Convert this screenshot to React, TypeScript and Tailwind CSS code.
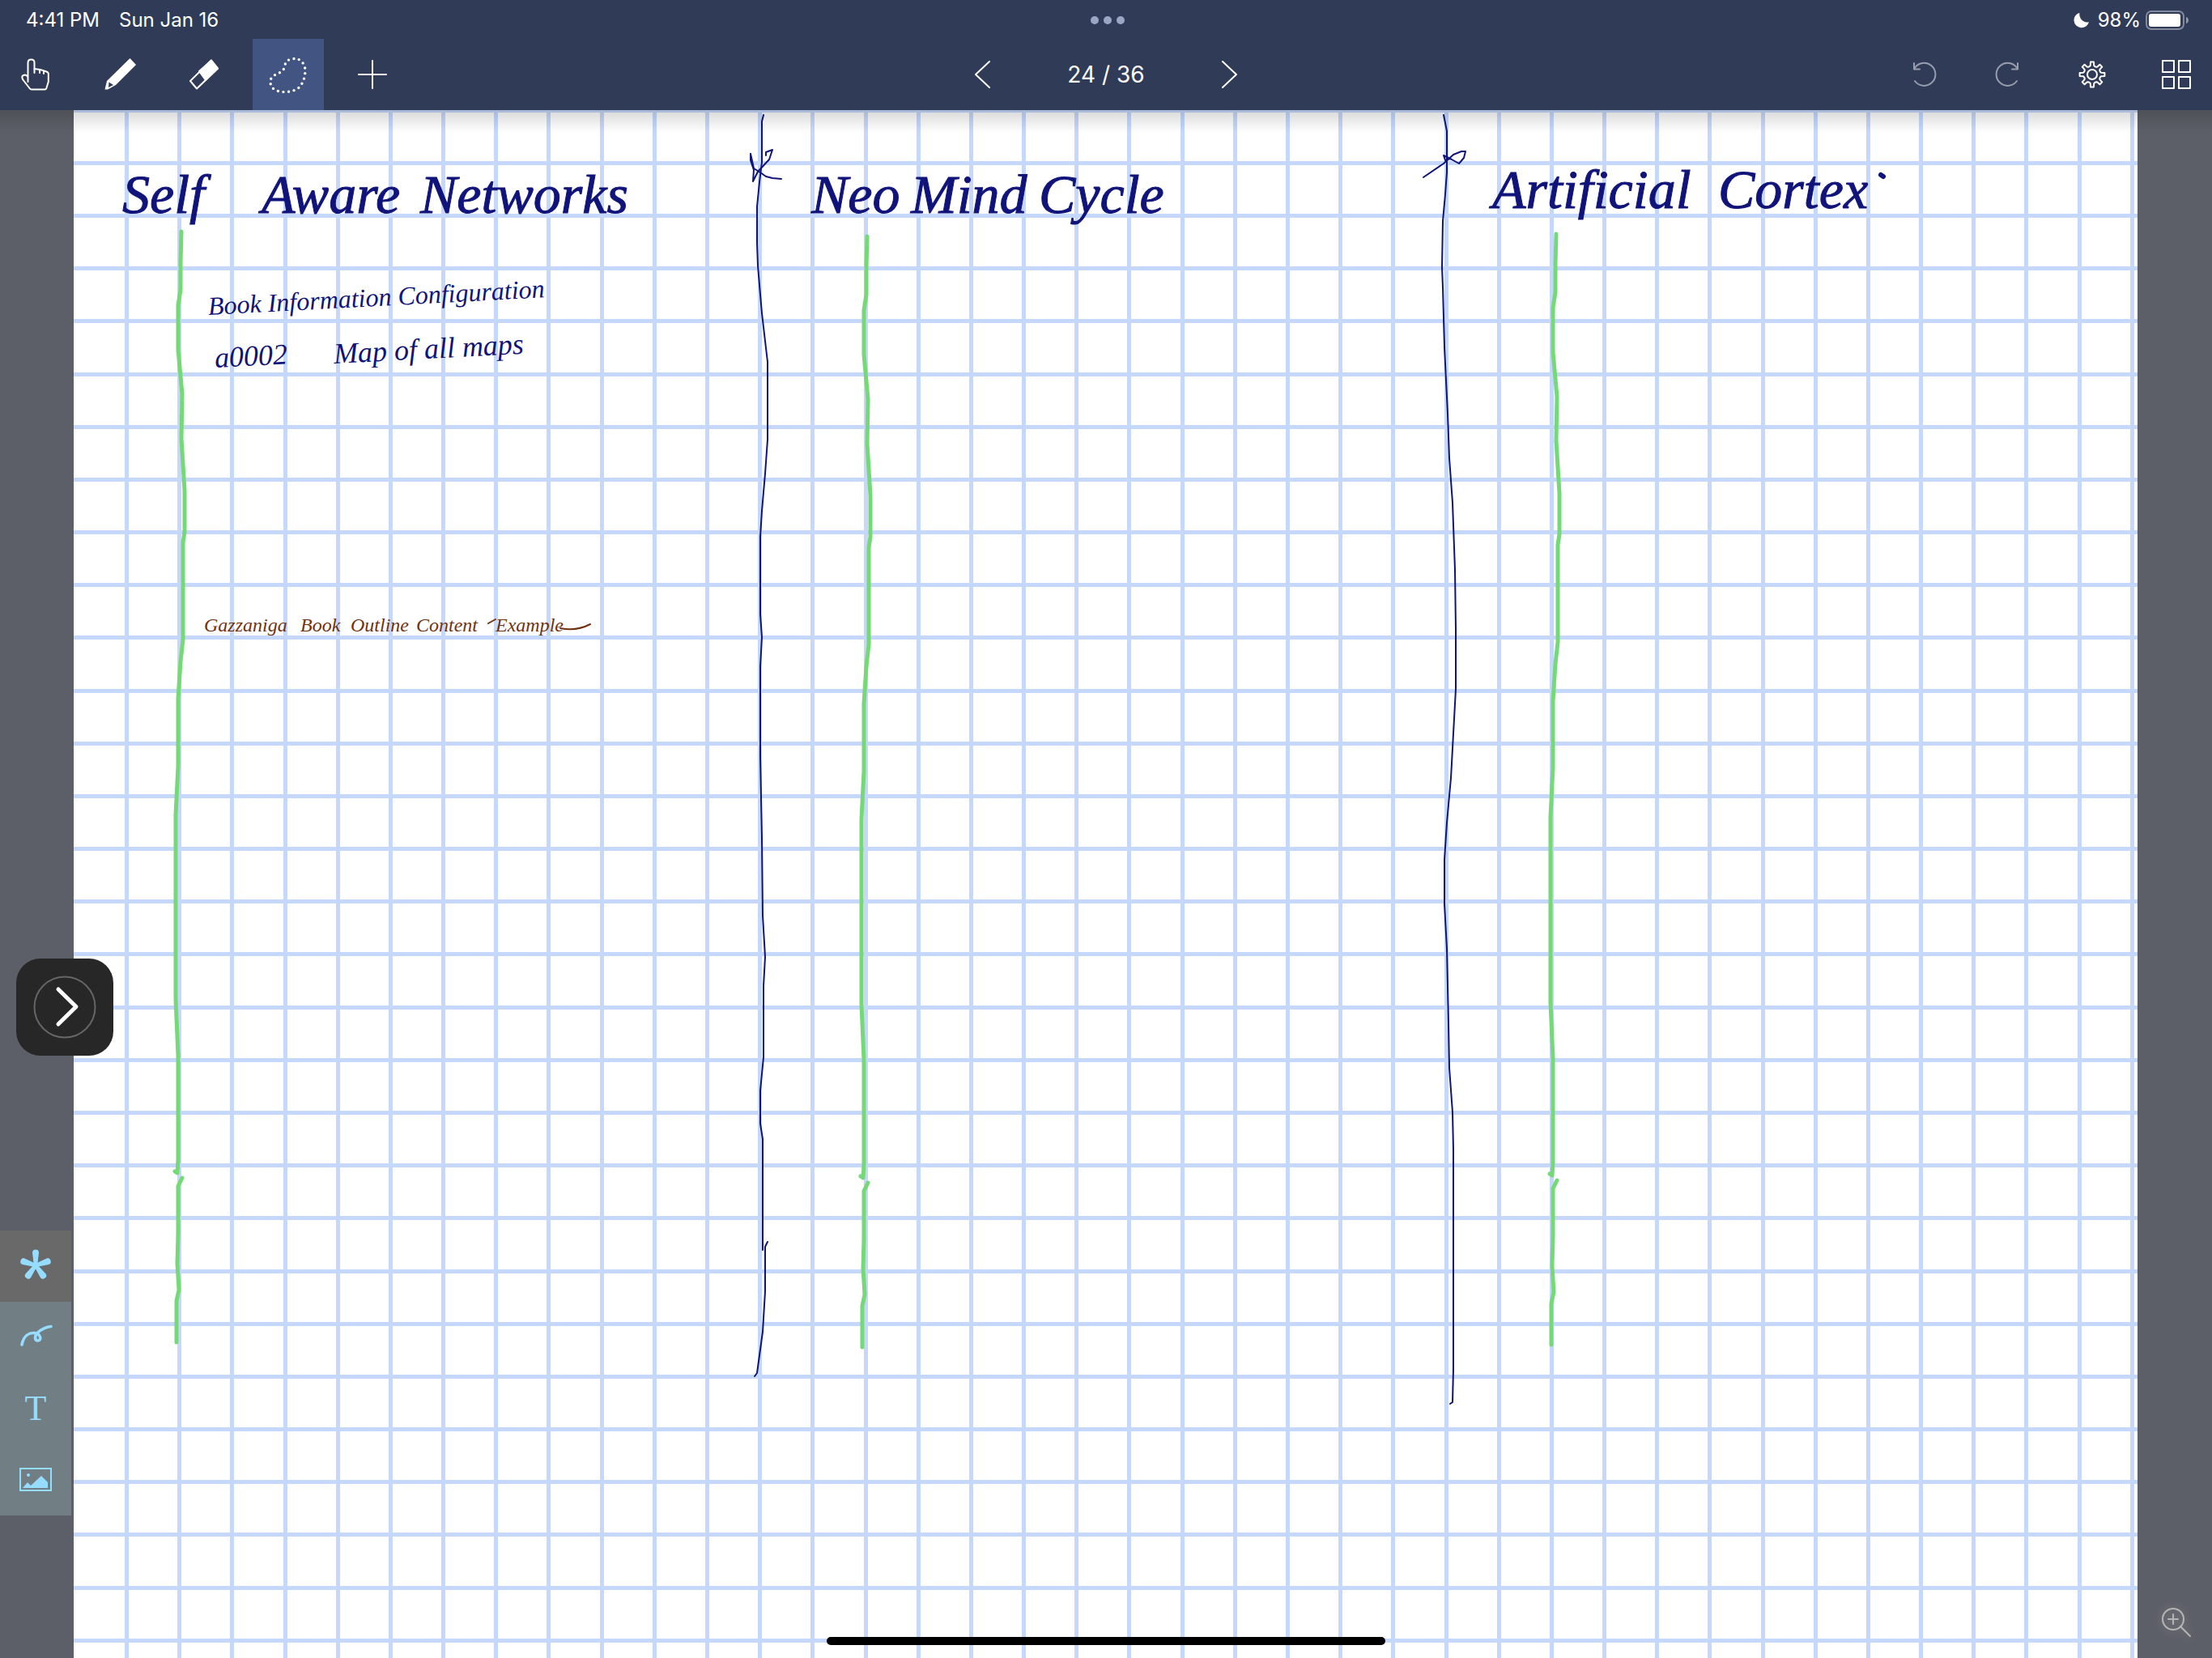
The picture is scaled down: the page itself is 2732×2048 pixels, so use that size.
import type { ReactNode } from "react";

const PITCH = 65.18;
const columns = Array.from({ length: 39 }, (_, i) => Math.round(154 + PITCH * i));
const rows = Array.from({ length: 30 }, (_, i) => Math.round(133.6 + PITCH * i));

const NAVY_DIVIDERS = [
  "943,142 941,150 941,200 938,225 935,255 935,300 936,328 939,364 941,387 948,447 948,543 945,585 941,631 939,663 939,759 941,787 939,823 939,934 941,1035 942,1131 945,1182 943,1218 943,1306 939,1347 939,1388 942,1407 942,1544",
  "948,1534 945,1540 945,1595 942,1645 935,1696 932,1700",
  "1783,142 1787,162 1787,213 1785,240 1782,273 1781,330 1782,355 1784,429 1788,511 1790,566 1794,621 1797,704 1798,777 1798,851 1795,906 1792,961 1787,1016 1784,1062 1784,1117 1787,1172 1789,1264 1790,1319 1794,1374 1795,1420 1795,1691 1794,1732 1791,1734",
  "927,190 931,208 939,213 946,218 954,220 965,221",
  "946,192 946,188 954,185 950,197 936,212 930,224 931,210 927,198 927,190",
  "1758,219 1783,202 1795,191 1805,187 1810,187 1808,195 1802,202 1793,197 1783,192 1785,198 1791,196",
];

const GREEN_STROKES = [
  "1071,292 1070,330 1070,364 1067,383 1067,438 1072,493 1071,548 1075,612 1075,663 1073,676 1073,796 1070,823 1067,869 1067,952 1064,1012 1064,1241 1067,1310 1067,1439 1066,1455 1063,1453",
  "1072,1461 1067,1471 1067,1530 1066,1567 1068,1599 1065,1613 1065,1664",
];

const GREEN_MARGINS = ["translate(-847 -6)", "translate(0 0)", "translate(851 -3)"];

function ToolButton({ label, active, children }: { label: string; active?: boolean; children: ReactNode }) {
  return (
    <button
      type="button"
      aria-label={label}
      className={
        active
          ? "flex size-[88px] items-center justify-center bg-[#425582]"
          : "flex size-[88px] items-center justify-center"
      }
    >
      {children}
    </button>
  );
}

function Icon({ size = 44, children }: { size?: number; children: ReactNode }) {
  return (
    <svg
      width={size}
      height={size}
      viewBox={`0 0 ${size} ${size}`}
      fill="none"
      stroke="currentColor"
      strokeWidth="2"
      strokeLinecap="round"
      strokeLinejoin="round"
    >
      {children}
    </svg>
  );
}

function gearPath() {
  const parts: string[] = [];
  for (let i = 0; i < 8; i++) {
    const center = (i * Math.PI) / 4;
    const pts: [number, number][] = [
      [-0.29, 10.5],
      [-0.19, 11.5],
      [-0.13, 15.5],
      [0.13, 15.5],
      [0.19, 11.5],
      [0.29, 10.5],
    ];
    for (const [a, r] of pts) {
      const x = 22 + r * Math.sin(center + a);
      const y = 22 - r * Math.cos(center + a);
      parts.push(`${x.toFixed(1)} ${y.toFixed(1)}`);
    }
  }
  return `M${parts.join("L")}Z`;
}

function StatusBar() {
  return (
    <div className="grid h-12 grid-cols-3 items-center pt-0.5 pr-7 pl-8 text-2xl leading-none">
      <div className="flex gap-6">
        <span>4:41 PM</span>
        <span>Sun Jan 16</span>
      </div>
      <div className="flex justify-center gap-1.5">
        <i className="size-2.5 rounded-full bg-[#9aa6c4]" />
        <i className="size-2.5 rounded-full bg-[#9aa6c4]" />
        <i className="size-2.5 rounded-full bg-[#9aa6c4]" />
      </div>
      <div className="flex items-center justify-end">
        <svg width="20" height="20" viewBox="0 0 20 20" className="mr-2.5">
          <path d="M7.4 .8C6.6 7 11 13.6 19 12.2A9.4 9.4 0 1 1 7.4 .8Z" fill="white" />
        </svg>
        <span>98%</span>
        <svg width="54" height="24" viewBox="0 0 54 24" className="ml-1.5">
          <rect x="1" y="1" width="46" height="22" rx="6" fill="none" stroke="#838aa0" strokeWidth="2" />
          <rect x="4" y="4" width="39" height="16" rx="3" fill="white" />
          <path d="M50 8c4 1 4 7 0 8Z" fill="#9097a9" />
        </svg>
      </div>
    </div>
  );
}

function Toolbar() {
  return (
    <div className="grid h-[88px] grid-cols-3 items-center">
      <div className="flex gap-4">
        <ToolButton label="Hand">
          <Icon>
            <path d="M12.500 31V7.500q0-4 4-4t4 4V15l7 1 5 1.500 3.500 1.200q1.800.6 1.800 2.500V31l-2.500 8q-.5 1.500-2 1.500H17q-1.500 0-2.500-1.500L6 28l-.8-3q.8-2.600 4-2.600 2.300.4 3.300 3" />
            <path d="M20.500 15v5M27 16v4M32 18v3" />
          </Icon>
        </ToolButton>
        <ToolButton label="Pen">
          <Icon>
            <path d="M34.500 2 42 10 17 35 7 40.500H3.500L6 30Z" fill="white" stroke="none" />
            <path d="M8.500 31.500 14 35l-6 3Z" fill="#303b57" stroke="none" />
          </Icon>
        </ToolButton>
        <ToolButton label="Eraser">
          <Icon>
            <path d="M31 4.500 39 14.500 13 39.500 5 30Z" />
            <path d="M31 4.500 39 14.500 24 29l-8-11Z" fill="white" />
          </Icon>
        </ToolButton>
        <ToolButton label="Lasso" active>
          <svg width="52" height="52" viewBox="0 0 52 52" fill="none" stroke="white" strokeWidth="3.400" strokeLinecap="round">
            <path
              d="M33 6.500C24 7 22 12 21.500 17C19 24 13 24 9 27C2 31 3 38 7 43C14 49 27 49 37 44C45 38 47 28 47 20C46 12 41 6 33 6.500Z"
              strokeDasharray="0 6.630"
            />
          </svg>
        </ToolButton>
        <ToolButton label="Add">
          <Icon>
            <path d="M22 5v34M5 22h34" />
          </Icon>
        </ToolButton>
      </div>
      <nav aria-label="Pages" className="flex items-center justify-center gap-[66px]">
        <button type="button" aria-label="Previous page" className="flex w-[88px] justify-center">
          <Icon>
            <path d="M31 6 14 22l17 16" />
          </Icon>
        </button>
        <span className="-mx-3 w-[110px] text-center text-[28px] leading-none whitespace-nowrap">24 / 36</span>
        <button type="button" aria-label="Next page" className="flex w-[88px] justify-center">
          <Icon>
            <path d="M13 6l17 16-17 16" />
          </Icon>
        </button>
      </nav>
      <div className="flex justify-end gap-4">
        <div className="flex gap-4 text-[#979dab]">
          <ToolButton label="Undo">
            <Icon>
              <path d="M11 30A14 14 0 1 0 10.500 14.500M10 8v7.500h7" />
            </Icon>
          </ToolButton>
          <ToolButton label="Redo">
            <Icon>
              <path d="M33 30A14 14 0 1 1 33.500 14.500M34 8v7.500h-7" />
            </Icon>
          </ToolButton>
        </div>
        <ToolButton label="Settings">
          <Icon>
            <path d={gearPath()} />
            <circle cx="22" cy="22" r="6" />
          </Icon>
        </ToolButton>
        <ToolButton label="All pages">
          <Icon>
            <path d="M5 5h14v14H5ZM25 5h14v14H25ZM5 25h14v14H5ZM25 25h14v14H25Z" />
          </Icon>
        </ToolButton>
      </div>
    </div>
  );
}

function LayerTools() {
  return (
    <div className="w-[88px] bg-[#717f85] text-[#96dcff]">
      <button type="button" aria-label="All layers" className="flex size-[88px] items-center justify-center bg-[#696969]">
        <svg width="44" height="44" viewBox="0 0 44 44" fill="currentColor">
          {[0, 72, 144, 216, 288].map((a) => (
            <path key={a} d="M20 22 18 5.500a4 4 0 0 1 8 0L24 22Z" transform={`rotate(${a} 22 21)`} />
          ))}
        </svg>
      </button>
      <button type="button" aria-label="Drawing layer" className="flex size-[88px] items-center justify-center">
        <Icon>
          <path
            d="M5 31C7 20 14 16 21 16.500C28 17 30 26 25 26C20 26 21 20 24 16.500C29 12 34 9 41 8.500"
            strokeWidth="3.600"
          />
        </Icon>
      </button>
      <button
        type="button"
        aria-label="Text layer"
        className="flex size-[88px] items-center justify-center font-['Liberation_Serif',serif] text-[44px] leading-none"
      >
        T
      </button>
      <button type="button" aria-label="Image layer" className="flex size-[88px] items-center justify-center">
        <Icon>
          <path d="M3 8h38v27H3Z" strokeLinejoin="miter" />
          <circle cx="13" cy="16" r="2" fill="currentColor" stroke="none" />
          <path d="M6 32 12 25l4 4L29 17l8 8v7Z" fill="currentColor" stroke="none" />
        </Icon>
      </button>
    </div>
  );
}

const titles = [
  { text: "Self", place: "left-[60px] top-[70px]" },
  { text: "Aware", place: "left-[232px] top-[70px]" },
  { text: "Networks", place: "left-[428px] top-[70px]" },
  { text: "Neo", place: "left-[911px] top-[70px]" },
  { text: "Mind", place: "left-[1034px] top-[70px]" },
  { text: "Cycle", place: "left-[1192px] top-[70px]" },
  { text: "Artificial", place: "left-[1752px] top-[64px]" },
  { text: "Cortex", place: "left-[2031px] top-[64px]" },
];

const brownWords = [
  { text: "Gazzaniga", place: "left-[161px] top-[624px]" },
  { text: "Book", place: "left-[280px] top-[624px]" },
  { text: "Outline", place: "left-[342px] top-[624px]" },
  { text: "Content", place: "left-[423px] top-[624px]" },
  { text: "Example", place: "left-[521px] top-[624px]" },
];

function NotePage() {
  return (
    <section aria-label="Page 24" className="relative flex-1 overflow-hidden bg-white font-['Liberation_Serif',serif] italic">
      <svg className="absolute inset-0 size-full" viewBox="91 136 2549 1912" preserveAspectRatio="xMinYMin slice" fill="none">
        <g fill="#c5d8fc" shapeRendering="crispEdges">
          {columns.map((x) => (
            <rect key={x} x={x} y="136" width="5" height="1912" />
          ))}
          {rows.map((y) => (
            <rect key={y} x="91" y={y} width="2549" height="5" />
          ))}
        </g>
        <g strokeLinecap="round" strokeLinejoin="round">
          {GREEN_MARGINS.map((shift) => (
            <g key={shift} transform={shift} stroke="#76d978" strokeWidth="5">
              {GREEN_STROKES.map((points) => (
                <polyline key={points} points={points} />
              ))}
            </g>
          ))}
          {NAVY_DIVIDERS.map((points) => (
            <polyline key={points} points={points} stroke="#10147a" strokeWidth="2" />
          ))}
          <path d="M2323 216l3 2" stroke="#10147a" strokeWidth="6" />
          <path d="M692 776q20 4 37-5M603 770l9-5" stroke="#6f3110" strokeWidth="2" />
        </g>
      </svg>
      {titles.map((t) => (
        <h2
          key={t.text}
          className={`absolute text-[68px] leading-none font-normal whitespace-nowrap text-[#10147a] [-webkit-text-stroke:1px_#10147a] ${t.place}`}
        >
          {t.text}
        </h2>
      ))}
      <p className="absolute top-[226px] left-[166px] origin-left -rotate-3 text-[32px] leading-none whitespace-nowrap text-[#10147a]">
        Book Information Configuration
      </p>
      <p className="absolute top-[288px] left-[174px] origin-left -rotate-3 text-4xl leading-none whitespace-nowrap text-[#10147a]">
        a0002
      </p>
      <p className="absolute top-[283px] left-[321px] origin-left -rotate-3 text-4xl leading-none whitespace-nowrap text-[#10147a]">
        Map of all maps
      </p>
      {brownWords.map((w) => (
        <span
          key={w.text}
          className={`absolute text-2xl leading-none whitespace-nowrap text-[#6f3110] ${w.place}`}
        >
          {w.text}
        </span>
      ))}
    </section>
  );
}

export default function App() {
  return (
    <div className="flex min-h-screen flex-col bg-[#5d5f68] font-['Inter',sans-serif] text-white">
      <header className="bg-[#303b57]">
        <StatusBar />
        <Toolbar />
      </header>
      <main className="relative flex flex-1">
        <aside className="flex w-[91px] flex-col justify-end pb-44">
          <LayerTools />
        </aside>
        <NotePage />
        <aside className="flex w-[92px] flex-col items-center justify-end pb-[22px]">
          <button type="button" aria-label="Zoom in" className="text-[#b5b5b5] drop-shadow-[0_0_6px_#8a8686]">
            <Icon size={48}>
              <circle cx="22" cy="22" r="13" />
              <path d="M31 31 43 43M22 16v12M16 22h12" />
            </Icon>
          </button>
        </aside>
        <div className="pointer-events-none absolute inset-x-0 top-0 h-7 bg-linear-to-b from-black/15 to-transparent" />
        <button
          type="button"
          aria-label="Open panel"
          className="absolute top-[1048px] left-5 flex size-[120px] items-center justify-center rounded-[30px] bg-[#272727]"
        >
          <svg width="80" height="80" viewBox="0 0 80 80" fill="none" strokeLinecap="round" strokeLinejoin="round">
            <circle cx="40" cy="40" r="37.500" stroke="#666" strokeWidth="2" />
            <path d="M32 18 54 39.500 32 61" stroke="white" strokeWidth="5" />
          </svg>
        </button>
        <div className="absolute bottom-4 left-1/2 h-2.5 w-[690px] -translate-x-1/2 rounded-full bg-black" />
      </main>
    </div>
  );
}
